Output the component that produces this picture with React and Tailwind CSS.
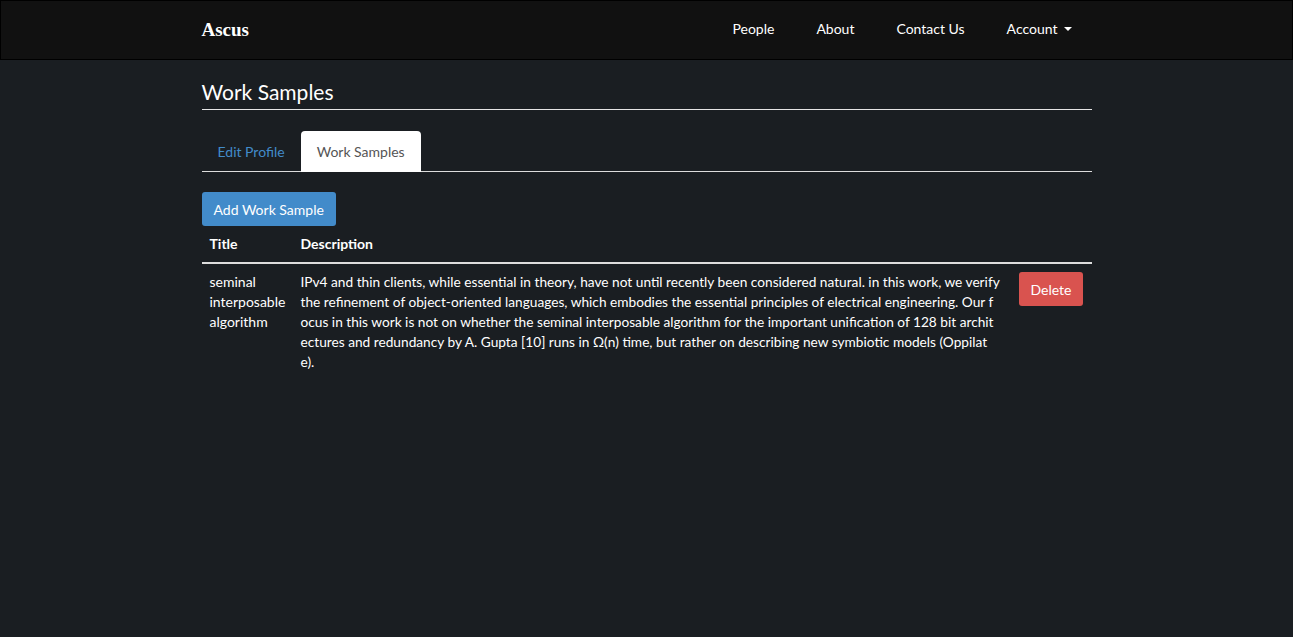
const descriptionLines = [
  'IPv4 and thin clients, while essential in theory, have not until recently been considered natural. in this work, we verify',
  'the refinement of object-oriented languages, which embodies the essential principles of electrical engineering. Our f',
  'ocus in this work is not on whether the seminal interposable algorithm for the important unification of 128 bit archit',
  'ectures and redundancy by A. Gupta [10] runs in \u03A9(n) time, but rather on describing new symbiotic models (Oppilat',
  'e).',
];

function NavBar() {
  return (
    <nav className="h-[60px] bg-[#111111] border border-black">
      <div className="w-[890px] mx-auto h-full flex items-center justify-between">
        <span className="text-[19px] font-bold text-white" style={{ fontFamily: '"Liberation Serif", "DejaVu Serif", serif' }}>
          Ascus
        </span>
        <ul className="flex items-center text-[14px] leading-[20px] text-white mr-[20px] -mt-[3px]">
          <li className="px-[21px]">People</li>
          <li className="px-[21px]">About</li>
          <li className="px-[21px]">Contact Us</li>
          <li className="pl-[21px] flex items-center gap-[6px]">
            Account
            <span className="w-0 h-0 border-x-[4px] border-x-transparent border-t-[4px] border-t-white" />
          </li>
        </ul>
      </div>
    </nav>
  );
}

export default function App() {
  return (
    <div className="min-h-screen bg-[#1a1e22]" style={{ fontFamily: 'Lato, "Open Sans", sans-serif' }}>
      <NavBar />

      <main className="w-[890px] mx-auto">
        <h1 className="pt-[18px] pb-[3px] text-[21px] leading-[28px] font-normal text-white border-b border-[#e5e5e5]">
          Work Samples
        </h1>

        <div className="mt-[21px] flex border-b border-[#dddddd] text-[14px]">
          <div className="px-[16px] h-[40px] flex items-center text-[#428bca]">Edit Profile</div>
          <div className="px-[16px] h-[41px] flex items-center bg-white text-[#555555] rounded-t-[4px] -mb-px">
            Work Samples
          </div>
        </div>

        <button className="mt-[20px] h-[34px] px-[12px] bg-[#428bca] text-white text-[14px] rounded-[3px]">
          Add Work Sample
        </button>

        <table className="w-full table-fixed text-[14px] text-white border-collapse">
          <thead>
            <tr className="border-b-2 border-[#dddddd]">
              <th className="w-[91px] text-left font-bold px-[8px] py-[8px] leading-[20px]">Title</th>
              <th className="text-left font-bold px-[8px] py-[8px] leading-[20px]">Description</th>
              <th className="w-[81px]" />
            </tr>
          </thead>
          <tbody>
            <tr className="align-top">
              <td className="px-[8px] py-[8px] leading-[20px]">
                seminal<br />interposable<br />algorithm
              </td>
              <td className="px-[8px] py-[8px] leading-[20px] text-[13.7px] whitespace-nowrap">
                {descriptionLines.map(line => (
                  <div key={line}>{line}</div>
                ))}
              </td>
              <td className="px-[8px] py-[8px]">
                <button className="h-[34px] px-[12px] bg-[#d9534f] text-white text-[14px] rounded-[3px]">
                  Delete
                </button>
              </td>
            </tr>
          </tbody>
        </table>
      </main>
    </div>
  );
}
